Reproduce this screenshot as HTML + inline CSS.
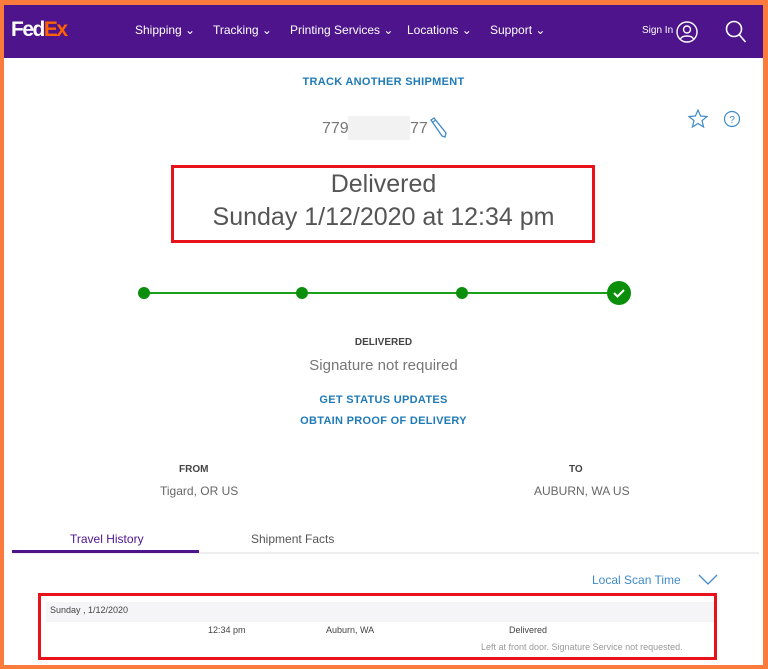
<!DOCTYPE html>
<html><head><style>
*{margin:0;padding:0;box-sizing:border-box}
body{width:768px;height:669px;background:#fa7b3c;font-family:"Liberation Sans",sans-serif;position:relative;overflow:hidden}
.page{position:absolute;left:4px;top:5px;width:759px;height:660px;background:#fff}
.hdr{position:absolute;left:0;top:0;width:759px;height:53px;background:#4d148c}
.t{position:absolute;white-space:nowrap}
.nav{color:#fff;font-size:12px;top:18px}
.c{left:0;width:759px;text-align:center}
.blue{color:#1f7ab8;font-weight:bold;font-size:11px;letter-spacing:.3px}
.gray{color:#666}
.box{position:absolute;border:3px solid #e8121b}
</style></head><body>
<div class="page">
<div class="hdr">
<div class="t" style="left:7px;top:13px;font-size:21px;font-weight:bold;letter-spacing:-1.5px;color:#fff">Fed<span style="color:#ff6200">Ex</span><span style="color:#ff6200;font-size:6px">.</span></div>
<div class="t nav" style="left:131px">Shipping ⌄</div>
<div class="t nav" style="left:209px">Tracking ⌄</div>
<div class="t nav" style="left:286px">Printing Services ⌄</div>
<div class="t nav" style="left:403px">Locations ⌄</div>
<div class="t nav" style="left:486px">Support ⌄</div>
<div class="t" style="left:638px;top:20px;color:#fff;font-size:10px">Sign In</div>
<svg class="t" style="left:672px;top:16px" width="22" height="22" viewBox="0 0 22 22" fill="none" stroke="#fff" stroke-width="1.4"><circle cx="11" cy="11" r="10"/><circle cx="11" cy="8.5" r="3.5"/><path d="M4.5 18c1.5-4 11.5-4 13 0"/></svg>
<svg class="t" style="left:721px;top:15px" width="22" height="24" viewBox="0 0 22 24" fill="none" stroke="#fff" stroke-width="1.6"><circle cx="9" cy="9" r="7.5"/><path d="M14.5 15l6 7"/></svg>
</div>
<div class="t c blue" style="top:71px">TRACK ANOTHER SHIPMENT</div>
<div class="t" style="left:318px;top:115px;font-size:16px;color:#777">779</div>
<div class="t" style="left:344px;top:111px;width:62px;height:24px;background:#f2f2f2"></div>
<div class="t" style="left:406px;top:115px;font-size:16px;color:#777">77</div>
<svg class="t" style="left:424px;top:112px" width="20" height="22" viewBox="0 0 20 22" fill="none" stroke="#3f8ac8" stroke-width="1.3"><path d="M3 3l3-2 12 15-1 4-3-1z M5 5l3-2"/></svg>
<svg class="t" style="left:684px;top:104px" width="20" height="20" viewBox="0 0 20 20" fill="none" stroke="#3f8ac8" stroke-width="1.2"><path d="M10 1l2.6 6 6.4.5-5 4.2 1.6 6.3L10 14.5 4.4 18 6 11.7 1 7.5 7.4 7z"/></svg>
<svg class="t" style="left:719px;top:105px" width="18" height="18" viewBox="0 0 18 18" fill="none" stroke="#3f8ac8" stroke-width="1.2"><circle cx="9" cy="9" r="7.5"/><text x="9" y="13" font-size="10" text-anchor="middle" fill="#3f8ac8" stroke="none" font-family="Liberation Sans">?</text></svg>
<div class="box" style="left:167px;top:160px;width:424px;height:78px"></div>
<div class="t c" style="top:165px;font-size:25px;color:#555">Delivered</div>
<div class="t c" style="top:198px;font-size:25px;color:#555">Sunday 1/12/2020 at 12:34 pm</div>
<div class="t" style="left:140px;top:287px;width:475px;height:2px;background:#1aa01a"></div>
<div class="t" style="left:134px;top:282px;width:12px;height:12px;border-radius:50%;background:#0b8f0b"></div>
<div class="t" style="left:292px;top:282px;width:12px;height:12px;border-radius:50%;background:#0b8f0b"></div>
<div class="t" style="left:452px;top:282px;width:12px;height:12px;border-radius:50%;background:#0b8f0b"></div>
<div class="t" style="left:603px;top:276px;width:24px;height:24px;border-radius:50%;background:#0b8f0b"></div>
<svg class="t" style="left:603px;top:276px" width="24" height="24" viewBox="0 0 24 24" fill="none" stroke="#fff" stroke-width="2"><path d="M7 12l3.5 3.5L17 9"/></svg>
<div class="t c" style="top:332px;font-size:10px;font-weight:bold;color:#444">DELIVERED</div>
<div class="t c" style="top:352px;font-size:15px;color:#777">Signature not required</div>
<div class="t c blue" style="top:389px">GET STATUS UPDATES</div>
<div class="t c blue" style="top:410px">OBTAIN PROOF OF DELIVERY</div>
<div class="t" style="left:175px;top:459px;font-size:10px;font-weight:bold;color:#444">FROM</div>
<div class="t gray" style="left:156px;top:479px;font-size:12px">Tigard, OR US</div>
<div class="t" style="left:565px;top:459px;font-size:10px;font-weight:bold;color:#444">TO</div>
<div class="t gray" style="left:530px;top:479px;font-size:12px">AUBURN, WA US</div>
<div class="t" style="left:66px;top:527px;font-size:12px;color:#4d148c">Travel History</div>
<div class="t" style="left:247px;top:527px;font-size:12px;color:#555">Shipment Facts</div>
<div class="t" style="left:8px;top:547px;width:747px;height:2px;background:#eee"></div>
<div class="t" style="left:8px;top:545px;width:187px;height:3px;background:#4d148c"></div>
<div class="t" style="left:588px;top:568px;font-size:12px;color:#3f8ac8">Local Scan Time</div>
<svg class="t" style="left:694px;top:569px" width="20" height="12" viewBox="0 0 20 12" fill="none" stroke="#3f8ac8" stroke-width="1.3"><path d="M1 1l9 9 9-9"/></svg>
<div class="box" style="left:34px;top:588px;width:679px;height:67px"></div>
<div class="t" style="left:42px;top:597px;width:668px;height:20px;background:#f5f5f7"></div>
<div class="t" style="left:46px;top:600px;font-size:9px;color:#444">Sunday , 1/12/2020</div>
<div class="t" style="left:204px;top:620px;font-size:9px;color:#444">12:34 pm</div>
<div class="t" style="left:322px;top:620px;font-size:9px;color:#444">Auburn, WA</div>
<div class="t" style="left:505px;top:620px;font-size:9px;color:#444">Delivered</div>
<div class="t" style="left:477px;top:637px;font-size:9px;color:#999">Left at front door. Signature Service not requested.</div>
</div>
</body></html>
